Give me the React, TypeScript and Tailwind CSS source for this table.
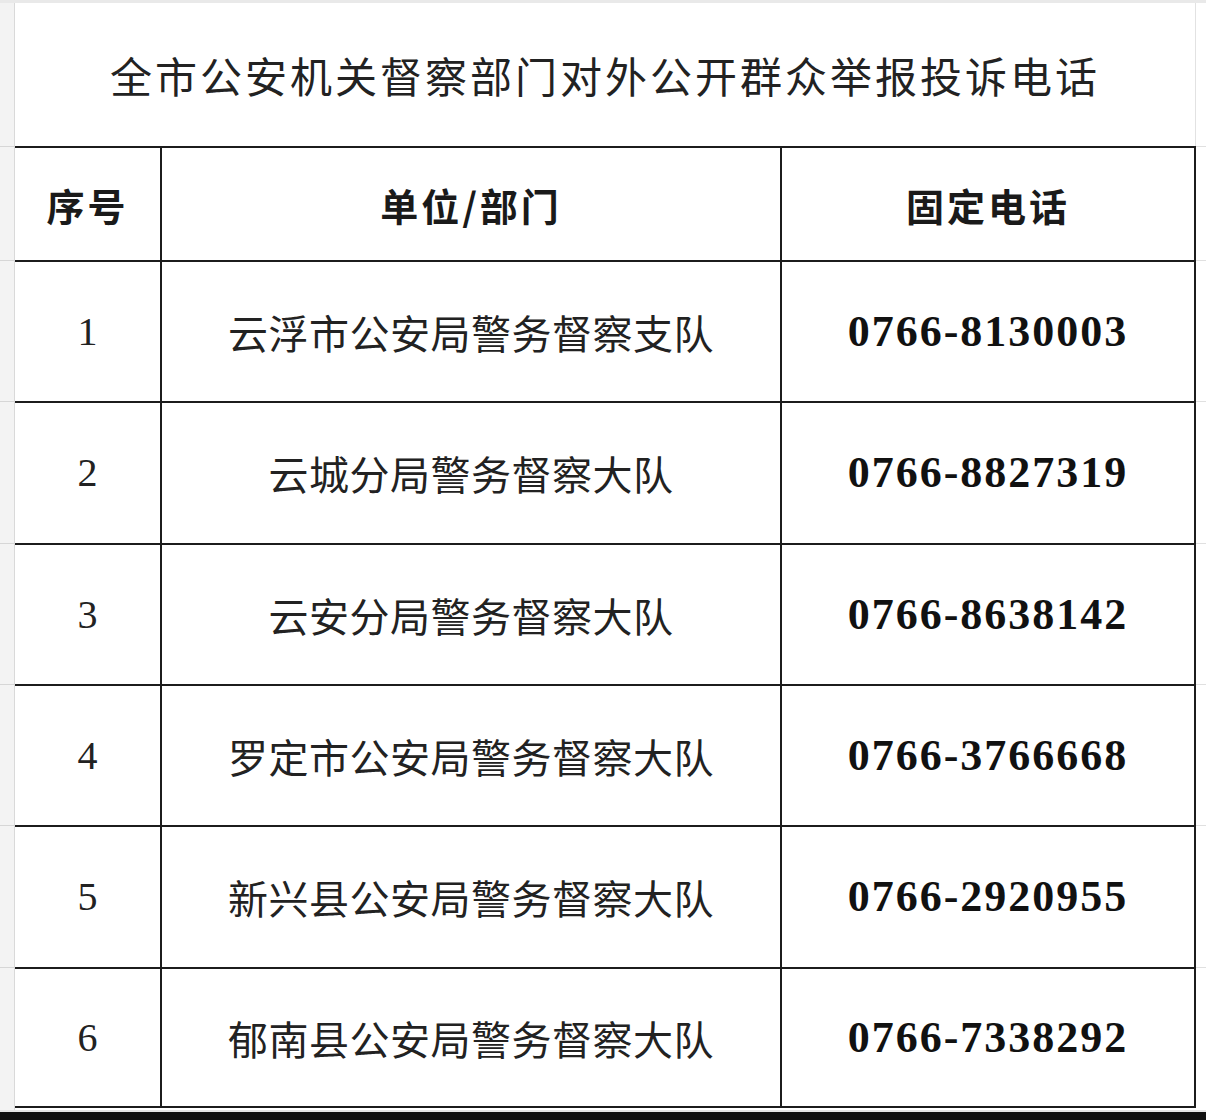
const rows = [
  { no: "1", unit: "云浮市公安局警务督察支队", phone: "0766-8130003", h: "h-[141px]" },
  { no: "2", unit: "云城分局警务督察大队", phone: "0766-8827319", h: "h-[142px]" },
  { no: "3", unit: "云安分局警务督察大队", phone: "0766-8638142", h: "h-[141px]" },
  { no: "4", unit: "罗定市公安局警务督察大队", phone: "0766-3766668", h: "h-[141px]" },
  { no: "5", unit: "新兴县公安局警务督察大队", phone: "0766-2920955", h: "h-[142px]" },
  { no: "6", unit: "郁南县公安局警务督察大队", phone: "0766-7338292", h: "h-[141px]" },
];

const cjk = "font-['Noto_Sans_CJK_SC',sans-serif]";
const serif = "font-['Liberation_Serif','Noto_Sans_CJK_SC',serif]";

export default function App() {
  return (
    <div className="w-[1206px] h-[1120px] bg-white flex flex-col overflow-hidden">
      {/* top grid strip */}
      <div className="h-[3px] bg-[#e9e9e9] shrink-0" />

      <div className="flex flex-1">
        {/* left spreadsheet gutter */}
        <div className="w-[15px] bg-[#f3f3f3] border-r border-[#d9d9d9] flex flex-col">
          <div className="h-[143px]" />
          {[114, 141, 142, 141, 141, 142, 141].map((h, i) => (
            <div key={i} className="border-t border-[#d6d6d6]" style={{ height: h }} />
          ))}
        </div>

        <div className="flex flex-col">
          {/* title row */}
          <div className="flex h-[143px]">
            <div
              className={`w-[1181px] border-r border-[#e2e2e2] flex items-center justify-center text-[42px] tracking-[3px] text-[#222] ${cjk}`}
            >
              全市公安机关督察部门对外公开群众举报投诉电话
            </div>
            <div className="w-[10px]" />
          </div>

          {/* header row */}
          <div className="flex h-[114px]">
            <div className="flex border-t-2 border-[#1c1c1c]">
              <div
                className={`w-[147px] border-r-2 border-[#1c1c1c] flex items-center justify-center text-[38px] font-bold tracking-[3px] text-[#1a1a1a] ${cjk}`}
              >
                序号
              </div>
              <div
                className={`w-[620px] border-r-2 border-[#1c1c1c] flex items-center justify-center text-[38px] font-bold tracking-[3px] text-[#1a1a1a] ${cjk}`}
              >
                单位/部门
              </div>
              <div
                className={`w-[414px] border-r-2 border-[#1c1c1c] flex items-center justify-center text-[38px] font-bold tracking-[3px] text-[#1a1a1a] ${cjk}`}
              >
                固定电话
              </div>
            </div>
            <div className="w-[10px] border-t border-[#e0e0e0]" />
          </div>

          {/* data rows */}
          {rows.map((r, i) => (
            <div key={r.no} className={`flex ${r.h}`}>
              <div
                className={`flex border-t-2 border-[#1c1c1c] ${i === rows.length - 1 ? "border-b-2" : ""}`}
              >
                <div
                  className={`w-[147px] border-r-2 border-[#1c1c1c] flex items-center justify-center text-[40px] text-[#222] ${serif}`}
                >
                  {r.no}
                </div>
                <div
                  className={`w-[620px] border-r-2 border-[#1c1c1c] flex items-center justify-center text-[40px] tracking-[0.5px] text-[#222] ${cjk}`}
                >
                  {r.unit}
                </div>
                <div
                  className={`w-[414px] border-r-2 border-[#1c1c1c] flex items-center justify-center text-[44px] font-bold tracking-[2px] text-[#111] ${serif}`}
                >
                  {r.phone}
                </div>
              </div>
              <div className="w-[10px] border-t border-[#e0e0e0]" />
            </div>
          ))}
        </div>
      </div>

      {/* bottom dark band */}
      <div className="h-[2px] bg-[#e6e6e6] shrink-0" />
      <div className="h-[8px] bg-[#111] shrink-0" />
    </div>
  );
}
